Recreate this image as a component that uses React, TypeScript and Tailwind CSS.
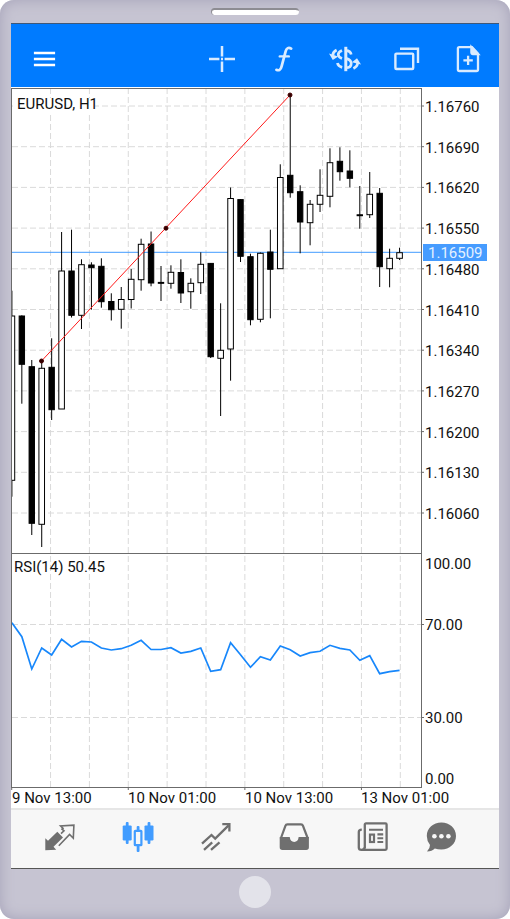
import React from 'react';

type Candle = [high: number, top: number, bottom: number, low: number, filled: 0 | 1];

const candles: Candle[] = [
  [290.7, 316, 480.3, 496.7, 0],
  [315.3, 316, 364.3, 403.7, 1],
  [360, 366.7, 523.3, 535, 1],
  [361, 368.3, 524.3, 547, 0],
  [338.3, 367.3, 409.7, 420, 1],
  [232, 271, 409, 409, 0],
  [229.7, 271, 315.3, 317.5, 1],
  [259.3, 264.7, 315.3, 329, 0],
  [262.3, 265, 267.7, 309.7, 1],
  [258.3, 266.3, 301.7, 307.7, 1],
  [293.3, 301.5, 309.7, 320.5, 1],
  [287, 299.5, 309.3, 328.7, 0],
  [269, 279.3, 299.5, 308.5, 0],
  [238.7, 244.3, 279.7, 290.7, 0],
  [231.5, 244, 283, 286.3, 1],
  [266, 282.4, 283.3, 301, 1],
  [265.3, 272.3, 283.3, 288.7, 0],
  [259.3, 272.5, 293, 303, 1],
  [278.3, 283.3, 291.7, 308.7, 0],
  [252.3, 264.3, 282.7, 294, 0],
  [263, 263.4, 356.7, 358, 1],
  [303.3, 350.3, 358.3, 416, 0],
  [187.5, 198.5, 349, 380.7, 0],
  [199, 199.6, 256.3, 262, 1],
  [253.7, 256.7, 319.7, 325.3, 1],
  [252.5, 253.3, 319.3, 322.3, 0],
  [229.7, 252, 269.3, 318.3, 1],
  [164.3, 177.5, 268.7, 268.7, 0],
  [95, 175.3, 192.7, 197.7, 1],
  [185.3, 191.7, 222, 253.3, 1],
  [200, 204.3, 222.7, 245.3, 0],
  [169.3, 195.3, 204.3, 212, 0],
  [148.3, 162.7, 196.3, 207.3, 0],
  [147.3, 161.3, 171.7, 180.7, 1],
  [150.3, 171, 178.3, 187.3, 1],
  [186, 214.8, 215.7, 228.7, 1],
  [172, 194.3, 214.7, 218, 0],
  [188, 193.3, 266.7, 287, 1],
  [248.7, 258.3, 268.7, 287.3, 0],
  [247.7, 252.7, 258.3, 260, 0],
];

const rsi = [
  622.7, 636.7, 669, 648, 655, 639.3, 647, 641.3, 642, 648, 650, 648.7, 645.3, 640.3, 649.5, 649.5, 647.7, 653,
  651.3, 648, 671.3, 669.7, 642.7, 654.7, 667.3, 656.7, 660, 646, 649.7, 656, 652.7, 651.3, 645.3, 648.3, 650,
  660.3, 655.7, 673.7, 671.7, 670.3,
];

const prices = [
  '1.16760',
  '1.16690',
  '1.16620',
  '1.16550',
  '1.16480',
  '1.16410',
  '1.16340',
  '1.16270',
  '1.16200',
  '1.16130',
  '1.16060',
];

const times = ['9 Nov 13:00', '10 Nov 01:00', '10 Nov 13:00', '13 Nov 01:00'];

const candleX = (i: number) => 11.9 + i * 9.94;
const priceY = (i: number) => 106 + i * 40.7;
const gridX = (i: number) => 11.7 + i * 38.86;

const Grid = () => (
  <g stroke="#dadada" strokeWidth="1" strokeDasharray="6 3">
    {[1, 2, 3, 4, 5, 6, 7, 8, 9, 10].map((i) => (
      <line key={i} x1={gridX(i)} x2={gridX(i)} y1="88" y2="787" />
    ))}
    {prices.map((price, i) => (
      <line key={price} x1="12" x2="421" y1={priceY(i)} y2={priceY(i)} />
    ))}
    <line x1="12" x2="421" y1="624.5" y2="624.5" />
    <line x1="12" x2="421" y1="717.5" y2="717.5" />
  </g>
);

const Candles = () => (
  <g stroke="#000" strokeWidth="1" clipPath="url(#plot)">
    {candles.map(([high, top, bottom, low, filled], i) => (
      <g key={i}>
        <line x1={candleX(i)} x2={candleX(i)} y1={high} y2={low} />
        <rect
          x={candleX(i) - (filled ? 2.7 : 2.8)}
          y={top}
          width={filled ? 5.4 : 5.6}
          height={bottom - top}
          fill={filled ? '#000' : '#fff'}
        />
      </g>
    ))}
  </g>
);

const Axes = () => (
  <>
    <g stroke="#6b6b6b" strokeWidth="1">
      <path d="M11.5 88v700M11 88.5h411M421.5 88v700M11 553.5h411M11 787.5h411" fill="none" />
      {prices.map((price, i) => (
        <line key={price} x1="421" x2="424" y1={priceY(i)} y2={priceY(i)} />
      ))}
      <path d="M421 624.5h3M421 717.5h3" />
      {times.map((time, i) => (
        <line key={time} x1={gridX(i * 3)} x2={gridX(i * 3)} y1="787" y2="790" />
      ))}
    </g>
    <g fill="#111" fontSize="15">
      {prices.map((price, i) => (
        <text key={price} x="425" y={Math.round(priceY(i) + 6)}>
          {price}
        </text>
      ))}
      <text x="425" y="569">100.00</text>
      <text x="425" y="630">70.00</text>
      <text x="425" y="723">30.00</text>
      <text x="425" y="784">0.00</text>
      {times.map((time, i) => (
        <text key={time} x={Math.round(gridX(i * 3))} y="803">
          {time}
        </text>
      ))}
    </g>
  </>
);

const Chart = () => (
  <svg viewBox="11 87 488 721" className="block h-auto w-full bg-white" role="img" aria-label="EURUSD, H1">
    <clipPath id="plot">
      <rect x="11" y="88" width="411" height="700" />
    </clipPath>
    <Grid />
    <rect x="13" y="98" width="82" height="14" fill="#fff" />
    <line x1="12" x2="421" y1="252.3" y2="252.3" stroke="#419cff" />
    <Candles />
    <g fill="#300" stroke="#ff1a1a">
      <line x1="41.5" y1="361" x2="290" y2="95" />
      <circle cx="41.5" cy="361" r="2" stroke="#400" />
      <circle cx="166" cy="228.2" r="2" stroke="#400" />
      <circle cx="290" cy="95" r="2" stroke="#400" />
    </g>
    <polyline
      points={rsi.map((y, i) => `${candleX(i)},${y}`).join(' ')}
      fill="none"
      stroke="#1787fb"
      strokeWidth="1.7"
      clipPath="url(#plot)"
    />
    <Axes />
    <rect x="423" y="244" width="64" height="17" fill="#469cff" />
    <g fontSize="15" fill="#111">
      <text x="428" y="258" fill="#e4f1ff">1.16509</text>
      <text x="17" y="109">EURUSD, H1</text>
      <text x="14" y="572">RSI(14) 50.45</text>
    </g>
  </svg>
);

const Toolbar = () => (
  <header className="flex h-16 items-center justify-between border-t border-[#3f5878] bg-[#007bff] pt-1.5 text-[#d9ebff]">
    <button aria-label="Menu" className="ml-[17px] p-1">
      <svg width="24" height="24" viewBox="0 0 24 24" stroke="#fff" strokeWidth="2.4" fill="none">
        <path d="M1.9 6h21.2M1.9 12h21.2M1.9 18h21.2" />
      </svg>
    </button>
    <div className="grid w-[63%] grid-cols-5 justify-items-center">
      <button aria-label="Crosshair">
        <svg width="32" height="32" viewBox="0 0 32 32" stroke="currentColor" strokeWidth="2.5" fill="none">
          <path d="M16 3v10.4M16 18.6V29M3 16h10.4M18.6 16H29M15 16h2" />
        </svg>
      </button>
      <button aria-label="Indicators">
        <svg width="32" height="32" viewBox="0 0 32 32" stroke="currentColor" fill="none" strokeLinecap="round">
          <path
            d="M23.2 5.6C20.6 4 18.5 5 17.7 8.2L13.6 23.4C12.8 26.8 10.8 28 8.4 26.8"
            strokeWidth="2.7"
          />
          <path d="M11.8 13.4h9" strokeWidth="2.4" />
        </svg>
      </button>
      <button aria-label="One click trading">
        <svg width="32" height="32" viewBox="0 0 32 32" stroke="currentColor" fill="none">
          <path d="M16.8 3.8v24.4" strokeWidth="3" />
          <path d="M22.2 11.5C21.6 8.6 19.4 7.6 17 7.6M17 15.4C20.4 16.4 22.2 18 22.2 20.4C22.2 23 20.2 24.6 17 24.6" strokeWidth="2.7" />
          <path d="M13 7.6C8 9.6 8 13.6 13 15.4M8.4 20C9 22.4 10.7 23.8 13.2 24.4" strokeWidth="2.7" />
          <path d="M7.6 7C5 8.2 3.8 9.6 3.8 12.4M24.4 25.4C27 24.2 28.6 22.6 28.6 20" strokeWidth="2.7" />
          <path d="M0 10.5L9.2 13.6L3.8 17ZM23 19.3L32 21.6L28 15.2Z" fill="currentColor" stroke="none" />
        </svg>
      </button>
      <button aria-label="Windows">
        <svg width="32" height="32" viewBox="0 0 32 32" stroke="currentColor" strokeWidth="2.4" fill="none">
          <rect x="4.4" y="10.6" width="17.8" height="15.4" rx="1" />
          <path d="M9 5.8h18V20" />
        </svg>
      </button>
      <button aria-label="New order">
        <svg width="32" height="32" viewBox="0 0 32 32" stroke="currentColor" strokeWidth="2.3" fill="none">
          <path d="M7.3 4.2H20L26 10.6V26.4a1.6 1.6 0 0 1-1.6 1.6H7.5A1.6 1.6 0 0 1 5.9 26.4V5.6a1.4 1.4 0 0 1 1.4-1.4Z" />
          <path d="M19.4 4.2v5.4a1.4 1.4 0 0 0 1.4 1.4H26Z" fill="currentColor" />
          <path d="M11.4 17.4h9.4M16.1 12.7v9.4" />
        </svg>
      </button>
    </div>
  </header>
);

const TabBar = () => (
  <nav className="grid h-[61px] grid-cols-[repeat(5,78fr)_60fr] items-center justify-items-center border-t-2 border-b border-t-[#e6e6e6] border-b-[#555] bg-[#f7f7f7] pr-7 pb-1 pl-2.5 text-[#6f6f6f]">
    <a href="#quotes" aria-label="Quotes">
      <svg width="32" height="32" viewBox="0 0 32 32">
        <path d="M1.3 17.3L4 19.8L13.3 10.7L19 16.6L9.5 25.7L12.2 28.8L1.3 29.2Z" fill="currentColor" />
        <path
          d="M17 12.6L20 9.8L17.4 7.6M19.6 7.9L16.6 5L29.9 4.2L29.3 17.2L25.6 13.4L14.8 24.8"
          fill="none"
          stroke="currentColor"
          strokeWidth="1.6"
        />
      </svg>
    </a>
    <a href="#chart" aria-label="Chart" className="text-[#419cff]">
      <svg width="32" height="32" viewBox="0 0 32 32" fill="currentColor">
        <rect x=".7" y="4.4" width="9" height="15" rx="1.2" />
        <rect x="3.8" y="1" width="2.8" height="22" rx="1" />
        <rect x="22.5" y="4.4" width="9" height="15" rx="1.2" />
        <rect x="25.6" y="1" width="2.8" height="22" rx="1" />
        <rect x="14.7" y="5" width="2.8" height="26" rx="1" />
        <rect x="12.8" y="9.8" width="6.6" height="14.4" rx=".5" fill="#f7f7f7" stroke="currentColor" strokeWidth="2.2" />
      </svg>
    </a>
    <a href="#trade" aria-label="Trade">
      <svg width="32" height="32" viewBox="0 0 32 32" fill="none" stroke="currentColor" strokeWidth="2.3">
        <path d="M2 22.7L11.5 14L15.2 17.6L28.6 4.4" />
        <path d="M22.3 3.2H29.4V10.4M4 28.8L12.2 21.3M11 28.8L19.5 21.3" />
      </svg>
    </a>
    <a href="#history" aria-label="History">
      <svg width="32" height="32" viewBox="0 0 32 32" fill="none" stroke="currentColor" strokeWidth="2.2">
        <path d="M2.8 17.5L7.4 4.8Q7.9 3.4 9.4 3.4H23Q24.5 3.4 25 4.8L29.8 17.5" />
        <path
          d="M2.8 17H10.8Q11.4 22 16.2 22T21.6 17H29.8V26.2Q29.8 27.8 28.2 27.8H4.4Q2.8 27.8 2.8 26.2Z"
          fill="currentColor"
        />
      </svg>
    </a>
    <a href="#news" aria-label="News">
      <svg width="32" height="32" viewBox="0 0 32 32" fill="none" stroke="currentColor" strokeWidth="2.3">
        <path d="M8.8 26.8V3.6Q8.8 2.4 10 2.4H29.4Q30.6 2.4 30.6 3.6V27.6Q30.6 28.8 29.4 28.8H5.4Q2.8 28.8 2.8 26.4V11Q2.8 8.6 5.8 8.6" />
        <path d="M8.8 26Q8.8 28.8 5.8 28.8" />
        <rect x="14" y="13.6" width="4" height="7.4" strokeWidth="2.2" />
        <path d="M13 8.8h14M21.4 13.4h5.8M21.4 17.2h5.8M21.4 21h5.8" strokeWidth="2.1" />
      </svg>
    </a>
    <a href="#messages" aria-label="Messages">
      <svg width="32" height="32" viewBox="0 0 32 32" fill="currentColor">
        <path d="M16.4 1.6C24.5 1.6 31 7.2 31 15S24.5 28.4 16.4 28.4Q12.9 28.4 9.8 27.4Q7 30.4 2 30.4Q5 27.6 5 24Q1.8 20 1.8 15C1.8 7.2 8.3 1.6 16.4 1.6Z" />
        <g fill="#f7f7f7">
          <circle cx="9.4" cy="15.2" r="2.3" />
          <circle cx="16.4" cy="15.2" r="2.3" />
          <circle cx="23.4" cy="15.2" r="2.3" />
        </g>
      </svg>
    </a>
  </nav>
);

const App = () => {
  return (
    <div className="w-full bg-white font-['Roboto',sans-serif]">
      <div className="rounded-[14px] bg-[#c6c4d2] px-[11px] shadow-[inset_0_0_14px_#a5a2b8]">
        <div className="flex h-[23px] items-center justify-center">
          <div className="h-[7px] w-[88px] rounded-full border-t-2 border-l border-[#8d8c92] bg-white" />
        </div>
        <Toolbar />
        <Chart />
        <TabBar />
        <div className="flex h-[50px] items-center justify-center pb-1">
          <button aria-label="Home" className="size-8 rounded-full bg-[#e3e3ea]" />
        </div>
      </div>
    </div>
  );
};

export default App;
